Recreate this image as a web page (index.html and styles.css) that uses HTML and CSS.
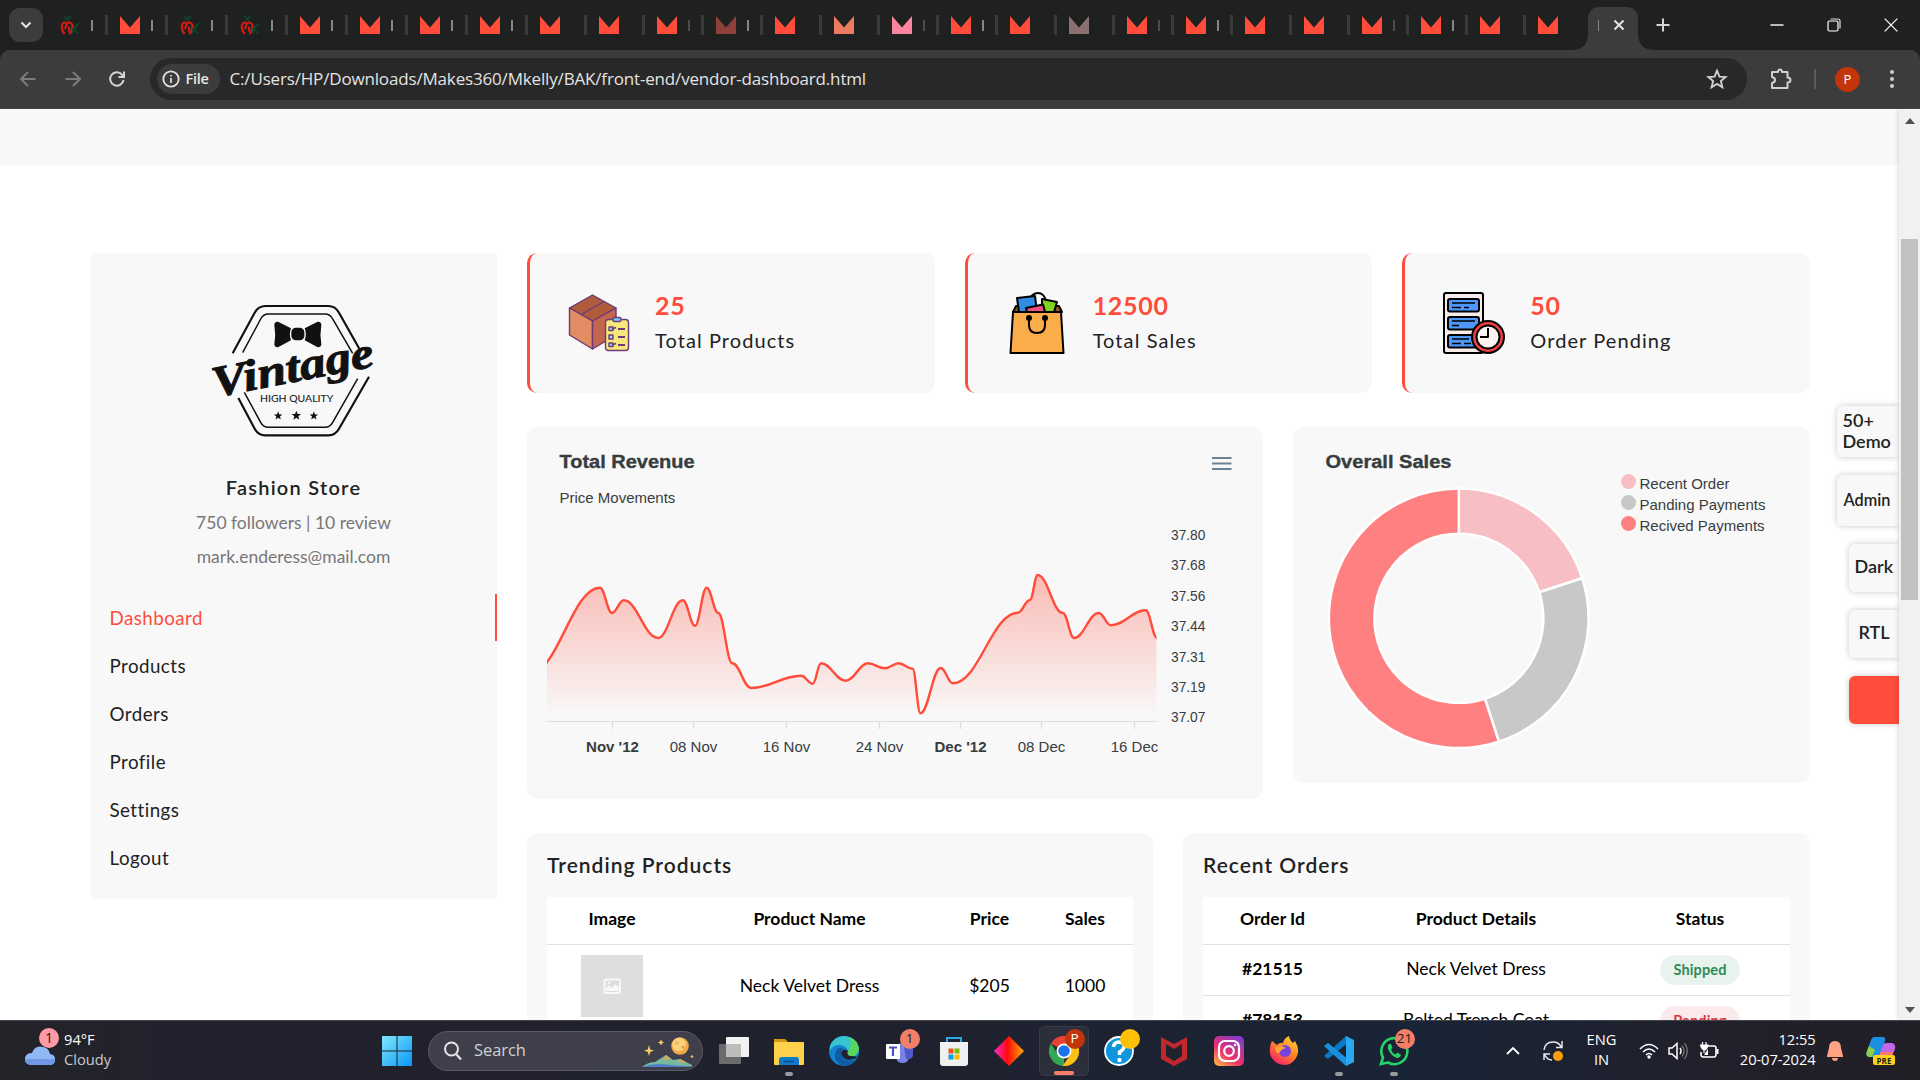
FILE: index.html
```html
<!DOCTYPE html>
<html lang="en">
<head>
<meta charset="utf-8">
<title>Vendor Dashboard</title>
<link rel="stylesheet" href="styles.css">
</head>
<body>
<svg class="defs" width="0" height="0" aria-hidden="true">
  <defs>
    <symbol id="m" viewBox="0 0 20 18"><path d="M0 0L10 11.5L20 0V18H0Z" fill="currentColor"/></symbol>
    <symbol id="mk" viewBox="0 0 20 20">
      <path d="M9 5Q5 4 5 0M7 4Q9 1 11 1" stroke="#0b4a2c" stroke-width="1.6" fill="none"/>
      <path d="M4.500 18.500Q1 14 2 9.500Q4 5 6.500 8.500Q10 5 12.500 9.500Q13 15 9.500 18.500M6.500 9L5 13.500M9 11V16" stroke="#d21a12" stroke-width="2.2" fill="none"/>
      <path d="M13 18V13M19 8L13.5 13L18 18" stroke="#0b4a2c" stroke-width="1.7" fill="none"/>
    </symbol>
    <symbol id="star" viewBox="-10 -10 20 20"><path d="M0-10L2.6-3.2L9.5-3.1L4 1.4L5.9 8.1L0 4.2L-5.9 8.1L-4 1.4L-9.5-3.1L-2.6-3.2Z"/></symbol>
  </defs>
</svg>

<header class="tabstrip">
  <button class="tab-search"><svg width="12" height="8" viewBox="0 0 12 8"><path d="M1.5 1.5L6 6L10.5 1.5" fill="none" stroke="#e3e3e3" stroke-width="2"/></svg></button>
  <div class="tabs">
    <div class="tab wide first"><svg class="mk"><use href="#mk"/></svg><i></i></div>
    <div class="tab wide"><svg><use href="#m"/></svg><i></i></div>
    <div class="tab wide"><svg class="mk"><use href="#mk"/></svg><i></i></div>
    <div class="tab wide"><svg class="mk"><use href="#mk"/></svg><i></i></div>
    <div class="tab wide"><svg><use href="#m"/></svg><i></i></div>
    <div class="tab wide"><svg><use href="#m"/></svg><i></i></div>
    <div class="tab wide"><svg><use href="#m"/></svg><i></i></div>
    <div class="tab wide"><svg><use href="#m"/></svg><i></i></div>
    <div class="tab"><svg><use href="#m"/></svg></div>
    <div class="tab"><svg><use href="#m"/></svg></div>
    <div class="tab"><svg><use href="#m"/></svg><i class="dim"></i></div>
    <div class="tab"><svg class="maroon"><use href="#m"/></svg><i></i></div>
    <div class="tab"><svg><use href="#m"/></svg></div>
    <div class="tab"><svg class="salmon"><use href="#m"/></svg></div>
    <div class="tab"><svg class="pink"><use href="#m"/></svg><i class="dim"></i></div>
    <div class="tab"><svg><use href="#m"/></svg><i></i></div>
    <div class="tab"><svg><use href="#m"/></svg></div>
    <div class="tab"><svg class="taupe"><use href="#m"/></svg></div>
    <div class="tab"><svg><use href="#m"/></svg><i class="dim"></i></div>
    <div class="tab"><svg><use href="#m"/></svg><i></i></div>
    <div class="tab"><svg><use href="#m"/></svg></div>
    <div class="tab"><svg><use href="#m"/></svg></div>
    <div class="tab"><svg><use href="#m"/></svg><i class="dim"></i></div>
    <div class="tab"><svg><use href="#m"/></svg><i></i></div>
    <div class="tab"><svg><use href="#m"/></svg></div>
    <div class="tab last"><svg><use href="#m"/></svg></div>
  </div>
  <div class="tab-active"><i></i><svg width="12" height="12" viewBox="0 0 12 12"><path d="M1.5 1.5L10.5 10.5M10.5 1.5L1.5 10.5" stroke="#e3e3e3" stroke-width="2"/></svg></div>
  <svg class="new-tab" width="14" height="14" viewBox="0 0 14 14"><path d="M7 .5V13.5M.5 7H13.5" stroke="#d5d5d5" stroke-width="2"/></svg>
  <div class="window-controls">
    <svg width="14" height="14" viewBox="0 0 14 14"><path d="M.5 7H13.5" stroke="#fff" stroke-width="1.4"/></svg>
    <svg width="14" height="14" viewBox="0 0 14 14"><rect x="1" y="3" width="10" height="10" rx="1.5" fill="none" stroke="#fff" stroke-width="1.2"/><path d="M3.5 1H11Q13 1 13 3V10.5" fill="none" stroke="#ddd" stroke-width="1.2"/></svg>
    <svg width="14" height="14" viewBox="0 0 14 14"><path d="M.7 .7L13.3 13.3M13.3 .7L.7 13.3" stroke="#fff" stroke-width="1.2"/></svg>
  </div>
</header>

<div class="toolbar">
  <svg class="nav off" viewBox="0 0 16 16"><path d="M15.5 8H1.5M8 1L1 8L8 15"/></svg>
  <svg class="nav off" viewBox="0 0 16 16"><path d="M.5 8H14.5M8 1L15 8L8 15"/></svg>
  <svg class="nav" viewBox="0 0 16 16"><path d="M14.5 9A6.7 6.7 0 1 1 13 3.6L15 5.8M15 .5V6H9.5"/></svg>
  <div class="omnibox">
    <div class="chip"><svg width="18" height="18" viewBox="0 0 18 18"><circle cx="9" cy="9" r="7.7" fill="none" stroke="#e3e3e3" stroke-width="1.8"/><path d="M9 8V13M9 5V6.6" stroke="#e3e3e3" stroke-width="1.7"/></svg>File</div>
    <span class="url">C:/Users/HP/Downloads/Makes360/Mkelly/BAK/front-end/vendor-dashboard.html</span>
    <svg class="bookmark" viewBox="-10 -10 20 20"><path d="M0-7.6L2.2-2.2L7.9-1.8L3.5 1.9L4.9 7.5L0 4.5L-4.9 7.5L-3.5 1.9L-7.9-1.8L-2.2-2.2Z"/></svg>
  </div>
  <svg class="puzzle" width="22" height="22" viewBox="0 0 22 22"><path d="M2 4H8Q8 1.500 10 1.500T12 4H17.500V9.500Q20.500 9.500 20.500 12T17.500 14.500V20H2V15Q5 14.500 5 12T2 9Z" fill="none" stroke="#d0d0d0" stroke-width="2" stroke-linejoin="round"/></svg>
  <span class="divider"></span>
  <span class="avatar">P</span>
  <svg class="dots" width="6" height="20" viewBox="0 0 6 20"><circle cx="3" cy="3" r="2"/><circle cx="3" cy="10" r="2"/><circle cx="3" cy="17" r="2"/></svg>
</div>

<div class="viewport">
  <main class="page">
    <div class="breadcrumb"></div>
    <div class="layout">
      <aside class="sidebar">
        <svg class="logo" viewBox="390 185 510 420">
          <g fill="none" stroke="#111">
            <path d="M458 342L524 220Q535 200 556 200H745Q766 200 777 220L838 328M867 412L777 568Q766 588 745 588H556Q535 588 524 568L475 476" stroke-width="6.500"/>
            <path d="M488 340L542 239Q550 224 565 224H735Q750 224 758 239L818 342M833 418L758 549Q750 564 735 564H565Q550 564 542 549L493 459" stroke-width="4.500"/>
          </g>
          <path d="M583 256Q584 246 594 247L633 267Q626 284 633 303L594 324Q584 325 583 315Q588 285 583 256ZM724 256Q723 246 713 247L674 267Q681 284 674 303L713 324Q723 325 724 315Q719 285 724 256Z" fill="#111"/>
          <rect x="634" y="265" width="39" height="38" rx="14" fill="#111"/>
          <text class="script" x="0" y="0" transform="translate(404 474) rotate(-11)" textLength="492" lengthAdjust="spacingAndGlyphs">Vintage</text>
          <text class="quality" x="540" y="488" textLength="220" lengthAdjust="spacingAndGlyphs">HIGH QUALITY</text>
          <use href="#star" x="581" y="516" width="27" height="27" fill="#111"/>
          <use href="#star" x="634" y="514" width="30" height="30" fill="#111"/>
          <use href="#star" x="688" y="516" width="27" height="27" fill="#111"/>
        </svg>
        <h2>Fashion Store</h2>
        <p>750 followers | 10 review</p>
        <p>mark.enderess@mail.com</p>
        <nav>
          <a class="active">Dashboard</a>
          <a>Products</a>
          <a>Orders</a>
          <a>Profile</a>
          <a>Settings</a>
          <a>Logout</a>
        </nav>
      </aside>

      <section class="content">
        <div class="stats">
          <div class="stat">
            <svg viewBox="0 0 62 62">
              <g stroke="#6b3a78" stroke-width="1.400" stroke-linejoin="round">
                <path d="M1.500 16L24.500 3L48 16L24.500 29Z" fill="#b05c3c"/>
                <path d="M1.500 16L24.500 29V57L1.500 43Z" fill="#e28c64"/>
                <path d="M24.500 29L48 16V43L24.500 57Z" fill="#c2674e"/>
                <path d="M13 22.500L36 9.500" fill="none"/>
                <rect x="37.500" y="27.500" width="23" height="31" rx="3" fill="#f7e87c"/>
                <rect x="45" y="25.500" width="8" height="4" rx="1.500" fill="#6fd0f5"/>
                <path d="M41 35H45V38.500H41ZM41 43H45V47H41ZM41 51H45V54.500H41Z" fill="#8ee0f5"/>
                <path d="M50 37H57M50 45H57M50 53H57M44 37L48 35.500M44 53L48 51.500" fill="none" stroke-width="1.800"/>
              </g>
            </svg>
            <div><strong>25</strong><span>Total Products</span></div>
          </div>
          <div class="stat">
            <svg viewBox="0 0 62 62">
              <g stroke="#000" stroke-width="2" stroke-linejoin="round">
                <path d="M7 20L10 14H53L56 20Z" fill="#8a5a22"/>
                <path d="M23 8Q26 1 32 1T40 9" fill="none" stroke-width="1.800"/>
                <path d="M11 6L29 4L31 20H13Z" fill="#2f8de4"/>
                <path d="M36 7L51 10L48 20H36Z" fill="#7ed321"/>
                <path d="M20 16L37 12.500L39 20H21Z" fill="#f0507c"/>
                <path d="M7 20H55L57.500 61H4.500Z" fill="#fbad4c"/>
                <path d="M23 27V33Q23 41 31 41T39 33V27" fill="none"/>
              </g>
              <circle cx="23" cy="26" r="3"/><circle cx="39" cy="26" r="3"/>
            </svg>
            <div><strong>12500</strong><span>Total Sales</span></div>
          </div>
          <div class="stat">
            <svg viewBox="0 0 62 62">
              <g stroke="#000" stroke-width="2" stroke-linejoin="round">
                <rect x="1" y="1" width="39" height="60" rx="2" fill="#f7ece9"/>
                <rect x="5" y="7" width="31" height="12.500" rx="2" fill="#4d97fb"/>
                <rect x="5" y="25" width="31" height="12.500" rx="2" fill="#4d97fb"/>
                <rect x="5" y="43" width="31" height="12.500" rx="2" fill="#4d97fb"/>
                <path d="M9 11H32M9 15.500H18M21 15.500H26M9 29H32M9 33.500H16M9 47H26M9 51.500H18M21 51.500H28" stroke-width="1.700"/>
                <circle cx="45" cy="45" r="16" fill="#ef4043"/>
                <circle cx="45" cy="45" r="11.500" fill="#fff3f0"/>
                <path d="M45 36V45H37" fill="none"/>
              </g>
            </svg>
            <div><strong>50</strong><span>Order Pending</span></div>
          </div>
        </div>

        <div class="charts">
          <div class="card revenue">
            <svg viewBox="527 427 736 372">
              <defs>
                <linearGradient id="fade" gradientUnits="userSpaceOnUse" x1="0" y1="575" x2="0" y2="716">
                  <stop offset="0" stop-color="#ff4c3b" stop-opacity=".36"/><stop offset="1" stop-color="#ff4c3b" stop-opacity="0"/>
                </linearGradient>
                <clipPath id="plot"><rect x="547" y="520" width="609.500" height="205"/></clipPath>
              </defs>
              <text class="title" x="559.500" y="468" textLength="135" lengthAdjust="spacingAndGlyphs">Total Revenue</text>
              <text class="label" x="559.500" y="503">Price Movements</text>
              <path d="M1212 458H1231.500M1212 463.500H1231.500M1212 469H1231.500" stroke="#6e8192" stroke-width="2"/>
              <g clip-path="url(#plot)"><path id="area" fill="url(#fade)"/><path id="line" fill="none" stroke="#ff4c3b" stroke-width="2.400"/></g>
              <path d="M547 721.500H1157M612.500 722V729M693.500 722V729M786.500 722V729M879.500 722V729M960.500 722V729M1041.500 722V729M1134.500 722V729" stroke="#dedede" stroke-width="1.200"/>
              <g class="axis">
                <text class="bold" x="612.500" y="752">Nov '12</text><text x="693.500" y="752">08 Nov</text><text x="786.500" y="752">16 Nov</text><text x="879.500" y="752">24 Nov</text><text class="bold" x="960.500" y="752">Dec '12</text><text x="1041.500" y="752">08 Dec</text><text x="1134.500" y="752">16 Dec</text>
              </g>
              <g class="scale">
                <text x="1171" y="540">37.80</text><text x="1171" y="570">37.68</text><text x="1171" y="601">37.56</text><text x="1171" y="631">37.44</text><text x="1171" y="662">37.31</text><text x="1171" y="692">37.19</text><text x="1171" y="722">37.07</text>
              </g>
            </svg>
          </div>
          <div class="card sales">
            <svg viewBox="1293 427 517 356">
              <text class="title" x="1325.500" y="468" textLength="126" lengthAdjust="spacingAndGlyphs">Overall Sales</text>
              <g transform="translate(1458.800 618.300)" stroke="#fff" stroke-width="2.500">
                <path d="M0-129.800A129.800 129.800 0 0 1 123.400-40.100L80.400-26.100A84.500 84.500 0 0 0 0-84.500Z" fill="#f7bfc3"/>
                <path d="M123.400-40.100A129.800 129.800 0 0 1 40.100 123.400L26.100 80.400A84.500 84.500 0 0 0 80.400-26.100Z" fill="#c8c8c8"/>
                <path d="M40.100 123.400A129.800 129.800 0 1 1 0-129.800V-84.500A84.500 84.500 0 1 0 26.100 80.400Z" fill="#ff8080"/>
              </g>
              <circle cx="1628.500" cy="481.500" r="7.500" fill="#f7bfc3"/><circle cx="1628.500" cy="502.500" r="7.500" fill="#c8c8c8"/><circle cx="1628.500" cy="523.500" r="7.500" fill="#ff8080"/>
              <text class="label" x="1639.500" y="489">Recent Order</text><text class="label" x="1639.500" y="510">Panding Payments</text><text class="label" x="1639.500" y="531">Recived Payments</text>
            </svg>
          </div>
        </div>

        <div class="tables">
          <div class="card list">
            <h3>Trending Products</h3>
            <div class="row trend head"><span>Image</span><span>Product Name</span><span>Price</span><span>Sales</span></div>
            <div class="row trend tall">
              <span><svg width="62" height="62" viewBox="0 0 62 62"><rect width="62" height="62" fill="#dedede"/><rect x="23.500" y="24.500" width="15.500" height="13.500" rx="1.500" fill="none" stroke="#f8f8f8" stroke-width="2"/><path d="M25 36V33L28.500 30L31 33L34 29L37.500 32V36Z" fill="#f8f8f8"/><circle cx="28" cy="28" r="1.300" fill="#f8f8f8"/></svg></span>
              <span>Neck Velvet Dress</span><span>$205</span><span>1000</span>
            </div>
          </div>
          <div class="card list">
            <h3>Recent Orders</h3>
            <div class="row orders head"><span>Order Id</span><span>Product Details</span><span>Status</span></div>
            <div class="row orders"><span class="id">#21515</span><span>Neck Velvet Dress</span><span><b class="pill shipped">Shipped</b></span></div>
            <div class="row orders"><span class="id">#78153</span><span>Belted Trench Coat</span><span><b class="pill pending">Pending</b></span></div>
          </div>
        </div>
      </section>
    </div>
    <div class="switcher">
      <div class="demo">50+<br>Demo</div>
      <div class="admin">Admin</div>
      <div class="mode">Dark</div>
      <div class="mode rtl">RTL</div>
      <div class="mode color"></div>
    </div>
  </main>
  <div class="scrollbar"><svg width="10" height="6"><path d="M0 6L5 0L10 6Z" fill="#505050"/></svg><div class="thumb"></div><svg class="down" width="10" height="6"><path d="M0 0L5 6L10 0Z" fill="#505050"/></svg></div>
</div>

<footer class="taskbar">
  <div class="weather">
    <svg width="36" height="46" viewBox="0 0 36 46">
      <path d="M7 37Q0 36 1 30Q2 25 8 25Q11 17 19 19Q25 20 26 26Q32 27 31 33Q30 37 26 37Z" fill="#8fb8f5"/><path d="M1 31H31Q30 37 26 37H7Q1 36 1 31Z" fill="#6f98e6"/>
      <circle cx="25" cy="10" r="10" fill="#ff99a4"/><text class="badge" x="25" y="15">1</text>
    </svg>
    <div><span>94°F</span><span class="soft">Cloudy</span></div>
  </div>
  <div class="launcher">
    <svg width="30" height="30" viewBox="0 0 30 30"><defs><linearGradient id="win" x1="0" y1="0" x2="1" y2="1" gradientUnits="objectBoundingBox"><stop stop-color="#7de9fb"/><stop offset="1" stop-color="#0a95f7"/></linearGradient></defs><path d="M0 0H14.500V14.500H0ZM15.500 0H30V14.500H15.500ZM0 15.500H14.500V30H0ZM15.500 15.500H30V30H15.500Z" fill="url(#win)"/></svg>
    <div class="search">
      <svg width="20" height="20" viewBox="0 0 20 20"><circle cx="8.500" cy="8" r="6.500" fill="none" stroke="#e6e6e6" stroke-width="2"/><path d="M13 13L18 18.500" stroke="#e6e6e6" stroke-width="2.200"/></svg>
      <span>Search</span>
      <svg width="52" height="32" viewBox="0 0 52 32">
        <path d="M0 32Q6 27 13 27L24 20L31 25L38 24L50 30V32Z" fill="#79b79f"/><path d="M0 32Q12 28 24 29.500T50 31V32H0Z" fill="#4f7fc8"/><path d="M24 20L29 24L21 25ZM38 24L45 27.500L36 27Z" fill="#d9a860"/>
        <circle cx="38" cy="11" r="8.800" fill="#f2a944"/><circle cx="37" cy="9.500" r="6.800" fill="#fcd27c"/><circle cx="35" cy="8" r="2" fill="#efb95e"/><circle cx="41" cy="12" r="1.500" fill="#e09a3c"/>
        <path d="M7 10L8.200 14.500L12 15.500L8.200 17L7 21L5.800 17L2 15.500L5.800 14.500ZM19 4.500L20 6.500L22 7.500L20 8.500L19 10.500L18 8.500L16 7.500L18 6.500ZM50 20L51.500 21.500L50 23L48.500 21.500Z" fill="#f7cf6a"/>
      </svg>
    </div>
  </div>
  <div class="apps">
    <div class="app"><svg viewBox="0 0 30 30"><rect y="8" width="22" height="20" rx="1" fill="#6b6b6b"/><rect x="7" y="1" width="23" height="20" rx="1" fill="#f2f2f2"/><rect x="7" y="8" width="15" height="13" fill="#bcbcbc"/></svg></div>
    <div class="app open"><svg viewBox="0 0 30 30"><path d="M0 3H11L14 6H30V12H0Z" fill="#d99a10"/><rect y="6" width="30" height="23" rx="1" fill="#ffd04a"/><path d="M5 29V24Q5 21 8 21H22Q25 21 25 24V29Z" fill="#1279c8"/><path d="M10 25.500H20" stroke="#0b4e8a" stroke-width="1.500"/></svg></div>
    <div class="app"><svg viewBox="0 0 30 30"><circle cx="15" cy="15" r="15" fill="#1482d0"/><path d="M1 10Q5 0 15 0Q28 1 30 13Q29 21 21 20Q17 19 19 15Q16 8 9 9Q3 10 1 15Z" fill="#36c5d0"/><path d="M20 1Q29 4 30 13Q29 21 21 20Q17 19 19 15Q24 9 20 1Z" fill="#5bd65c"/><path d="M14 12Q9 20 16 24Q22 26 27 23Q22 31 12 29Q3 23 7 15Q9 11 14 12Z" fill="#0e5ba8"/><path d="M19 15Q14 11 12 17Q13 23 20 24L28 22Q30 20 21 20Q17 19 19 15Z" fill="#20222e"/></svg></div>
    <div class="app"><svg viewBox="0 0 30 30"><rect x="12" y="7" width="13" height="20" rx="6" fill="#7b83eb"/><path d="M20 11H29V20Q27 24 22 23Z" fill="#5059c9"/><rect x="2" y="8" width="14" height="15" rx="1" fill="#fff"/><path d="M5 11.500H13M9 11.500V20" stroke="#4b53bc" stroke-width="2.200"/></svg><em class="coral">1</em></div>
    <div class="app"><svg viewBox="0 0 30 30"><path d="M8 7V2H22V7" fill="none" stroke="#29a9ea" stroke-width="2"/><path d="M1 6H29V27Q29 30 26 30H4Q1 30 1 27Z" fill="#f0f0f0"/><path d="M9.500 12.500H14.500V17.500H9.500Z" fill="#f25022"/><path d="M15.500 12.500H20.500V17.500H15.500Z" fill="#7fba00"/><path d="M9.500 18.500H14.500V23.500H9.500Z" fill="#00a4ef"/><path d="M15.500 18.500H20.500V23.500H15.500Z" fill="#ffb900"/></svg></div>
    <div class="app"><svg viewBox="0 0 30 30"><defs><linearGradient id="gem"><stop stop-color="#ff2ad4"/><stop offset=".45" stop-color="#ff0a0a"/><stop offset="1" stop-color="#ffae00"/></linearGradient></defs><path d="M15 0L30 15L15 30L0 15Z" fill="url(#gem)"/></svg></div>
    <div class="app current"><svg viewBox="0 0 30 30"><path d="M15 15L2 7.500A15 15 0 0 1 28 7.500H15Z" fill="#ea4335"/><path d="M15 15L15 30A15 15 0 0 1 2 7.500L9 19Z" fill="#34a853"/><path d="M15 15V7.500H28A15 15 0 0 1 13.500 30L21.500 18.500Z" fill="#fbc116"/><circle cx="15" cy="15" r="7.500" fill="#fff"/><circle cx="15" cy="15" r="5.800" fill="#1a73e8"/></svg><em class="profile">P</em></div>
    <div class="app"><svg viewBox="0 0 30 30"><circle cx="15" cy="15" r="14" fill="#0d96dc" stroke="#fff" stroke-width="1.800"/><path d="M9.500 11Q10 6 15 6Q20.500 6.500 20 11Q19.500 14 15.500 16V19" fill="none" stroke="#fff" stroke-width="3.500"/><circle cx="15.500" cy="24" r="2.200" fill="#fff"/></svg><em class="gold"></em></div>
    <div class="app"><svg viewBox="0 0 30 30"><path d="M2 1L15 8L28 1V23L15 30L2 23Z" fill="#c1272d"/><path d="M7 8L15 13L23 8V20L15 25L7 20Z" fill="#20222e"/></svg></div>
    <div class="app"><svg viewBox="0 0 30 30"><defs><linearGradient id="insta" x1="0" y1="1" x2=".7" y2="0"><stop stop-color="#ffc83d"/><stop offset=".45" stop-color="#f0306a"/><stop offset="1" stop-color="#8a3ac8"/></linearGradient></defs><rect width="30" height="30" rx="5" fill="url(#insta)"/><rect x="5" y="5" width="20" height="20" rx="6" fill="none" stroke="#fff" stroke-width="2.200"/><circle cx="15" cy="15" r="4.800" fill="none" stroke="#fff" stroke-width="2.200"/><circle cx="21" cy="9" r="1.300" fill="#fff"/></svg></div>
    <div class="app"><svg viewBox="0 0 30 30"><defs><linearGradient id="fox" x1="1" y1="0" x2=".3" y2="1"><stop stop-color="#ffe040"/><stop offset=".5" stop-color="#ff8a24"/><stop offset="1" stop-color="#f5226a"/></linearGradient></defs><path d="M3 5L8 9Q11 6 14 7Q15 2 20 0Q21 5 24 7L26 5Q31 13 28 20Q24 29 15 29Q4 28 1 18Q0 10 3 5Z" fill="url(#fox)"/><circle cx="16" cy="15" r="6" fill="#7542e0"/><path d="M6 12Q11 8 17 12Q12 13 11 16Q8 20 6 12Z" fill="#ffa52e"/></svg></div>
    <div class="app open"><svg viewBox="0 0 30 30"><path d="M22 0L30 4V26L22 30Z" fill="#2aa8f2"/><path d="M22 0V8.500L4 23L0 20Z" fill="#0a78c2"/><path d="M22 30V21.500L4 7L0 10Z" fill="#1c90dc"/></svg></div>
    <div class="app open"><svg viewBox="0 0 30 30"><path d="M2 28L4 21.500A13 13 0 1 1 9 26.500Z" fill="none" stroke="#25d366" stroke-width="2.600"/><path d="M10 8Q8 10 9 13Q12 20 18 22Q21 22 22 19L18.500 16.500L16.500 18.500Q13 17 12 13.500L13.500 12L12 8Z" fill="#25d366"/></svg><em class="coral">21</em></div>
  </div>
  <div class="tray">
    <svg class="chev" width="14" height="10" viewBox="0 0 14 10"><path d="M1 8L7 2L13 8" fill="none" stroke="#fff" stroke-width="1.800"/></svg>
    <svg class="sync" width="22" height="22" viewBox="0 0 22 22"><path d="M2 10Q3 2 11 2Q17 2 19 7M20 1V7.500H14M2 20V14H8M2.500 14.500Q5 20 10 20" fill="none" stroke="#e8e8e8" stroke-width="1.500"/><circle cx="16" cy="16" r="5" fill="#ff9d0a"/></svg>
    <div class="lang">ENG<br>IN</div>
    <svg class="wifi" width="20" height="16" viewBox="0 0 20 16"><path d="M1 6Q10-3 19 6M4 9Q10 3 16 9M7 12Q10 9 13 12" fill="none" stroke="#fff" stroke-width="1.600"/><circle cx="10" cy="14" r="1.700" fill="#fff"/></svg>
    <svg class="sound" width="20" height="18" viewBox="0 0 20 18"><path d="M1 6H4L9 1.500V16.500L4 12H1ZM12 6Q14 9 12 12" fill="none" stroke="#fff" stroke-width="1.500"/><path d="M14 3.500Q18 9 14 14.500M16.500 1Q22 9 16.500 17" fill="none" stroke="#777" stroke-width="1.300"/></svg>
    <svg class="battery" width="20" height="18" viewBox="0 0 20 18"><path d="M8 4H15Q17 4 17 6V12Q17 15 15 15H4Q2 15 2 12V10" fill="none" stroke="#fff" stroke-width="1.600"/><path d="M18.500 7V12" stroke="#fff" stroke-width="2"/><path d="M9 7V13H5Z" fill="#fff"/><path d="M3.500 0V3M7 0V3M1.500 3H9Q8 8 5.500 8T1.500 3ZM5 7V11" stroke="#fff" stroke-width="1.200" fill="#fff"/></svg>
    <div class="clock">12:55<br>20-07-2024</div>
    <svg class="bell" width="18" height="20" viewBox="0 0 18 20"><path d="M9 0Q15 0 15 7L17 15V16H1V15L3 7Q3 0 9 0ZM6 17H12Q12 20 9 20T6 17Z" fill="#ffa383"/></svg>
    <svg class="copilot" width="30" height="30" viewBox="0 0 30 30"><path d="M8 1H17Q20 1 19 5L14 21H4Q-1 21 1 15L5 4Q6 1 8 1Z" fill="#1b8fe0"/><path d="M3 10L9 14L6 21H4Q-1 21 1 15Z" fill="#8dd14a"/><path d="M20 7H26Q30 8 29 13L26 20H13L17 9Q18 7 20 7Z" fill="#c566e8"/><path d="M15 16L27 16L26 20H13Z" fill="#ff7a66"/><rect x="7" y="19" width="22" height="10" rx="2" fill="#ffd21a"/><text class="pre" x="18" y="27.500">PRE</text></svg>
  </div>
</footer>
<script src="chart.js"></script>
</body>
</html>
```
FILE: chart.js
```js
// Draws the revenue curve with flat tangents at every data point.
const points = [
  [530, 673], [600, 587.7], [612, 613], [623.7, 600.3], [658, 638], [682.9, 600.3], [695, 625.7],
  [706.6, 587.7], [718.3, 613], [732.3, 663.3], [751.2, 688], [801, 675.7], [812.8, 683.7],
  [821, 663.3], [845.7, 680.7], [868, 663.3], [885, 668.3], [898.6, 663.3], [912.6, 668.7],
  [920.4, 713.3], [940.7, 668], [952.9, 683.3], [1017.8, 612.7], [1029.9, 600], [1037.7, 575],
  [1062.9, 613], [1074, 638], [1098.8, 613], [1110.9, 625.3], [1145.8, 610.3], [1157, 638]
];
let d = 'M' + points[0];
for (let i = 1; i < points.length; i++) {
  const [x0, y0] = points[i - 1];
  const [x1, y1] = points[i];
  const k = (x1 - x0) * 0.4;
  d += `C${x0 + k} ${y0} ${x1 - k} ${y1} ${x1} ${y1}`;
}
document.getElementById('line').setAttribute('d', d);
document.getElementById('area').setAttribute('d', d + 'V721H530Z');
```
FILE: styles.css
```css
* { box-sizing: border-box; }
body { margin: 0; width: 1920px; height: 1080px; overflow: hidden; display: flex; flex-direction: column; background: #fff; font-family: Lato, sans-serif; color: #222; }
svg { display: block; flex: none; }
.defs { position: absolute; }
h2, h3, p { margin: 0; }

/* Browser tabs */
.tabstrip { height: 50px; flex: none; background: #1f2120; display: flex; align-items: center; }
.tab-search { width: 34px; height: 34px; margin-left: 8.500px; border: 0; padding: 0; border-radius: 11px; background: #3c3c3c; display: flex; align-items: center; justify-content: center; }
.tabs { display: flex; margin-left: 2.500px; flex: none; }
.tab { width: 58.740px; height: 20px; flex: none; border-left: 3px solid #393a3a; display: flex; align-items: center; padding-left: 12px; color: #ff4c3b; }
.tab.wide { width: 60px; }
.tab.first { border-color: transparent; }
.tab.last { width: 64.500px; }
.tab svg { width: 20px; height: 18px; }
.tab svg.mk { height: 21px; }
.tab i, .tab-active i { width: 1.500px; height: 11px; margin-left: 11px; background: #85868a; }
.tab-active i { margin-left: 10px; }
.tab i.dim { background: #4c4e4d; }
.tab .maroon { color: #8f4039; }
.tab .salmon { color: #ef7a62; }
.tab .pink { color: #fb85a0; }
.tab .taupe { color: #8a706f; }
.tab-active { width: 50px; height: 43px; align-self: flex-end; position: relative; border-radius: 11px 11px 0 0; background: #3c3c3c; display: flex; align-items: center; padding-bottom: 7px; }
.tab-active svg { margin-left: 13.500px; }
.tab-active::before, .tab-active::after { content: ""; position: absolute; bottom: 0; width: 14px; height: 14px; }
.tab-active::before { left: -14px; background: radial-gradient(circle at 0 0, transparent 13.500px, #3c3c3c 14px); }
.tab-active::after { right: -14px; background: radial-gradient(circle at 100% 0, transparent 13.500px, #3c3c3c 14px); }
.new-tab { margin-left: 18px; }
.window-controls { margin-left: auto; display: flex; gap: 43px; padding-right: 22px; }

/* Browser toolbar */
.toolbar { height: 59px; flex: none; background: #3c3c3c; border-radius: 10px 10px 0 0; box-shadow: 0 -10px #1f2120; clip-path: inset(0); display: flex; align-items: center; padding: 0 25px 0 20px; border-bottom: 1px solid #484444; }
.nav { width: 16px; height: 16px; margin-right: 28.500px; fill: none; stroke: #d5d5d5; stroke-width: 2; }
.nav.off { stroke: #7c7c7c; }
.nav:nth-of-type(3) { margin-right: 24.500px; }
.omnibox { width: 1597px; height: 42px; border-radius: 21px; background: #282828; display: flex; align-items: center; padding: 0 19px 0 7px; }
.chip { width: 63px; height: 30px; border-radius: 15px; background: #3c3c3c; display: flex; align-items: center; gap: 6px; padding: 0 0 1px 5px; color: #e8e8e8; font: 600 14.500px "Open Sans", sans-serif; letter-spacing: -.300px; }
.url { margin-left: 10px; padding-bottom: 1px; flex: 1; color: #e3e3e3; font: 17px "Open Sans", sans-serif; letter-spacing: -.165px; }
.bookmark { width: 22px; height: 22px; fill: none; stroke: #d0d0d0; stroke-width: 1.700; }
.puzzle { margin-left: 23px; }
.divider { width: 2px; height: 20px; margin-left: 22px; background: #5c5c5c; }
.avatar { width: 25px; height: 25px; margin-left: 19.500px; border-radius: 50%; background: #c2350b; color: #fff; font: 13px/24px "Open Sans", sans-serif; text-align: center; }
.dots { margin-left: auto; fill: #d0d0d0; }

/* Page */
.viewport { height: 911px; flex: none; display: flex; overflow: hidden; }
.page { width: 1899px; position: relative; overflow: hidden; }
.breadcrumb { height: 56px; background: #f8f8f8; }
.layout { display: flex; align-items: flex-start; gap: 30px; padding: 88px 89px 0 90px; }
.sidebar { width: 407px; height: 646px; flex: none; background: #f8f8f8; display: flex; flex-direction: column; align-items: center; }
.logo { width: 170px; height: 140px; margin: 48px 0 0 3px; }
.logo .script { font: italic bold 132px "Liberation Serif", serif; fill: #111; stroke: #111; stroke-width: 3px; }
.logo .quality { font: 500 29px Lato, sans-serif; fill: #222; }
.sidebar h2 { margin-top: 32.500px; font-size: 20px; line-height: 26px; font-weight: 600; letter-spacing: 1.250px; }
.sidebar p { color: #777; font-size: 17.500px; line-height: 24px; margin-top: 10px; }
.sidebar p:nth-of-type(1) { margin-top: 11.500px; }
.sidebar nav { width: 100%; margin-top: 25px; }
.sidebar a { display: block; height: 47px; margin-bottom: 1px; padding-left: 19.500px; font-size: 18.750px; line-height: 48px; letter-spacing: .450px; }
.sidebar a.active { color: #ff4c3b; border-right: 2.500px solid #ff4c3b; }
.content { flex: 1; display: flex; flex-direction: column; }
.stats { display: flex; gap: 30px; }
.stat { flex: 1; height: 140px; border-left: 3px solid #ff4c3b; border-radius: 10px; background: #f8f8f8; display: flex; align-items: center; gap: 25px; padding-left: 38px; }
.stat svg { width: 62px; height: 62px; }
.stat div { display: flex; flex-direction: column; gap: 8px; padding-bottom: 2px; }
.stat strong { color: #ff4c3b; font-size: 25px; line-height: 28px; font-weight: 700; letter-spacing: .700px; }
.stat span { font-size: 20px; line-height: 26px; letter-spacing: 1.080px; }
.card { background: #f8f8f8; border-radius: 10px; }
.charts { display: flex; align-items: flex-start; gap: 30px; margin-top: 34px; }
.revenue { width: 736px; height: 372px; }
.revenue svg { width: 736px; height: 372px; }
.sales { width: 517px; height: 356px; }
.sales svg { width: 517px; height: 356px; }
.charts text { font-family: "Liberation Sans", Arial, sans-serif; fill: #373d3f; }
.title { font-size: 17.500px; font-weight: 700; stroke: #373d3f; stroke-width: .350px; }
.label { font-size: 15px; }
.axis text { font-size: 15px; text-anchor: middle; }
.axis .bold { font-weight: 700; }
.scale text { font-size: 13.750px; }
.tables { display: flex; gap: 30px; margin-top: 34px; }
.list { flex: 1; height: 300px; padding: 19px 20px; }
.list h3 { font-size: 21px; line-height: 26px; font-weight: 600; letter-spacing: 1px; }
.row { display: grid; align-items: center; height: 51px; background: #fff; border-bottom: 1px solid #dee2e6; color: #000; font-size: 17.500px; }
.row span { display: flex; justify-content: center; }
.row.head { height: 48px; margin-top: 19px; font-weight: 700; padding-bottom: 4px; }
.row.tall { height: 83px; }
.row.tall > span:not(:first-child) { padding-bottom: 2px; }
.row .id { font-weight: 700; }
.trend { grid-template-columns: 130px 265px 95px 96px; }
.orders { grid-template-columns: 139px 268px 180px; }
.pill { width: 80px; height: 30px; border-radius: 15px; font-size: 14.500px; line-height: 29px; text-align: center; font-weight: 700; letter-spacing: .150px; }
.shipped { background: #e8f3ee; color: #2e8b57; }
.pending { background: #fbeaec; color: #dc3545; }
.orders .id, .orders:not(.head) > span:nth-child(2) { margin-bottom: 4px; }

/* Floating theme switches */
.switcher { position: absolute; right: 0; top: 297px; width: 62px; display: flex; flex-direction: column; align-items: flex-end; color: #222; font-size: 18px; font-weight: 600; }
.switcher div { background: #f8f8f8; box-shadow: 0 0 6px rgba(0, 0, 0, .22); border-radius: 6px 0 0 6px; padding-left: 5.500px; }
.demo { width: 62px; height: 51px; line-height: 21px; padding-top: 4px; }
.admin { width: 62px; height: 51px; margin-top: 18px; font-size: 16.300px; line-height: 50px; }
.switcher .admin { padding-left: 6.500px; }
.mode { width: 50px; height: 48px; margin-top: 18px; line-height: 45px; }
.switcher .rtl { padding-left: 9.500px; }
.switcher .color { background: #ff4c3b; }
.scrollbar { width: 21px; position: relative; background: #f1f1f1; box-shadow: 0 0 5px rgba(0, 0, 0, .2); display: flex; flex-direction: column; align-items: center; padding: 9px 0 7px; }
.thumb { width: 17px; height: 361px; margin-top: 115px; background: #c1c1c1; }
.down { margin-top: auto; }

/* Taskbar */
.taskbar { height: 60px; flex: none; border-top: 1px solid #43464a; background: linear-gradient(90deg, #232428 0, #22212d 8%, #1f212e 50%, #192436 74%, #221f29 92%, #201f26); display: flex; align-items: center; color: #fff; font: 14.700px/20px "Open Sans", sans-serif; }
.weather { width: 382px; padding-left: 24px; display: flex; align-items: center; gap: 4px; }
.weather div { display: flex; flex-direction: column; padding-bottom: 4px; }
.soft { color: #c9c9cc; }
.badge { font: 14px "Open Sans", sans-serif; text-anchor: middle; fill: #1a1a1a; }
.launcher { display: flex; align-items: center; gap: 16px; }
.search { width: 275px; height: 40px; border: 1px solid #5b5b66; border-radius: 20px; background: #3f3f4b; display: flex; align-items: center; padding: 0 8px 0 14px; font-size: 16.400px; color: #cfcfd3; }
.search span { margin-left: 11px; flex: 1; padding-bottom: 1px; }
.apps { display: flex; margin-left: 3.500px; }
.app { width: 55px; height: 50px; position: relative; display: flex; align-items: center; justify-content: center; }
.app > svg { width: 30px; height: 30px; }
.app.open::after { content: ""; position: absolute; bottom: 0; width: 8px; height: 4px; border-radius: 2px; background: #9a9ba1; }
.app.current::before { content: ""; position: absolute; inset: 0 2.500px; border: 1px solid #3a3b48; border-radius: 5px; background: #2c2e3b; }
.app.current::after { content: ""; position: absolute; bottom: 1px; width: 20px; height: 4px; border-radius: 2px; background: #f5816a; }
.app.current > svg { position: relative; }
.app em { position: absolute; top: 3px; right: 7px; width: 20px; height: 20px; border-radius: 50%; font: 13.500px/19px "Open Sans", sans-serif; text-align: center; color: #1a1a1a; }
.coral { background: #f47f69; }
.app .profile { background: #c2350b; color: #fff; }
.gold { background: #ffc107; }
.tray { margin-left: auto; display: flex; align-items: center; padding-right: 24.500px; }
.sync { margin-left: 22px; }
.lang { margin-left: 22px; width: 32px; text-align: center; padding-bottom: 3px; }
.wifi { margin-left: 21px; }
.sound { margin-left: 9px; }
.battery { margin-left: 11px; }
.clock { margin-left: 17px; width: 80px; text-align: right; letter-spacing: -.100px; padding-bottom: 4px; }
.bell { margin-left: 10px; }
.copilot { margin-left: 22px; }
.pre { font: 700 8px "Open Sans", sans-serif; text-anchor: middle; fill: #222; }
```
